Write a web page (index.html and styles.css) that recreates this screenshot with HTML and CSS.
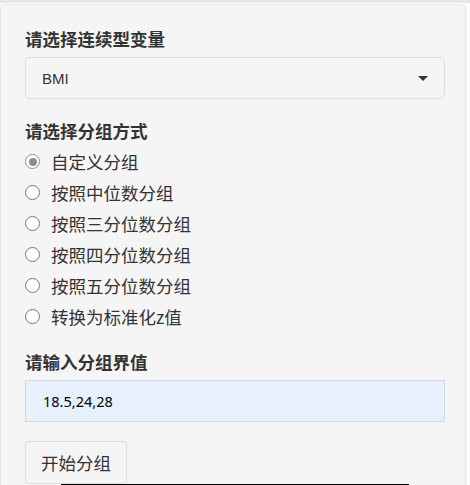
FILE: index.html
```html
<!DOCTYPE html>
<html lang="zh">
<head>
<meta charset="utf-8">
<link rel="stylesheet" href="styles.css">
</head>
<body>
<div class="topbar"></div>
<div class="well">
  <div class="form-group">
    <label class="control-label">请选择连续型变量</label>
    <div class="select">
      <span class="select-text">BMI</span>
      <span class="caret"></span>
    </div>
  </div>
  <div class="form-group">
    <label class="control-label">请选择分组方式</label>
    <div class="options">
      <div class="radio"><span class="dot checked"></span><span>自定义分组</span></div>
      <div class="radio"><span class="dot"></span><span>按照中位数分组</span></div>
      <div class="radio"><span class="dot"></span><span>按照三分位数分组</span></div>
      <div class="radio"><span class="dot"></span><span>按照四分位数分组</span></div>
      <div class="radio"><span class="dot"></span><span>按照五分位数分组</span></div>
      <div class="radio"><span class="dot"></span><span>转换为标准化z值</span></div>
    </div>
  </div>
  <div class="form-group">
    <label class="control-label">请输入分组界值</label>
    <div class="input">18.5,24,28</div>
  </div>
  <div class="btn">开始分组</div>
  <div class="black-line"></div>
</div>
</body>
</html>
```

FILE: styles.css
```css
html, body {
  margin: 0;
  padding: 0;
  background: #fbfbfc;
  font-family: "Noto Sans CJK SC", "Liberation Sans", sans-serif;
  color: #333;
  overflow: hidden;
}
.topbar {
  height: 3px;
  background: #e4e6ec;
}
.well {
  position: relative;
  margin-top: 1px;
  width: 420px;
  padding: 21px 20px 24px 24px;
  background: #f5f5f5;
  border: 1px solid #e6e6e6;
  border-radius: 5px;
  height: 600px;
}
.form-group {
  display: flex;
  flex-direction: column;
  margin-bottom: 19px;
}
.control-label {
  font-size: 17.5px;
  font-weight: bold;
  line-height: 25px;
  height: 25px;
  margin-bottom: 6px;
  color: #333;
}
.select {
  height: 40px;
  border: 1px solid #dcdcdc;
  border-radius: 5px;
  background: #f5f5f5;
  display: flex;
  align-items: center;
  justify-content: space-between;
  padding: 0 16px 0 16px;
}
.select-text {
  font-family: "Liberation Sans", "Noto Sans CJK SC", sans-serif;
  font-size: 15px;
  color: #333;
}
.caret {
  width: 0;
  height: 0;
  border-left: 5px solid transparent;
  border-right: 5px solid transparent;
  border-top: 5px solid #333;
}
.options {
  display: flex;
  flex-direction: column;
  gap: 6px;
  margin-bottom: 1px;
}
.radio {
  display: flex;
  align-items: center;
  height: 25px;
  font-size: 17.5px;
  color: #333;
}
.dot {
  box-sizing: border-box;
  width: 15px;
  height: 15px;
  border-radius: 50%;
  border: 1px solid #767676;
  background: #fff;
  margin-right: 11px;
  display: flex;
  align-items: center;
  justify-content: center;
}
.dot.checked {
  border: 1.5px solid #8d8d8d;
}
.dot.checked::after {
  content: "";
  width: 8px;
  height: 8px;
  border-radius: 50%;
  background: #8d8d8d;
}
.input {
  box-sizing: border-box;
  height: 42px;
  border: 1px solid #d0d7e2;
  background: #e8f0fe;
  display: flex;
  align-items: center;
  padding-left: 17px;
  font-family: "Noto Sans", "Noto Sans CJK SC", sans-serif;
  font-size: 14.5px;
  color: #000;
}
.btn {
  display: inline-flex;
  align-items: center;
  box-sizing: border-box;
  height: 43px;
  width: 102px;
  justify-content: center;
  border: 1px solid #dcdcdc;
  border-radius: 4px;
  background: #f5f5f5;
  font-size: 17.5px;
  color: #333;
}
.black-line {
  position: absolute;
  left: 60px;
  top: 479px;
  width: 348px;
  height: 1px;
  background: #000;
}
```
